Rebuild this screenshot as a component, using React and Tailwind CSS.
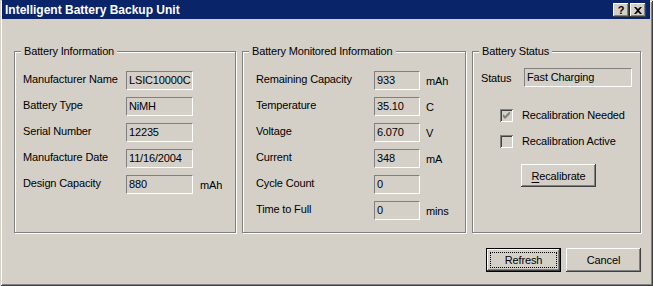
const RAISED =
  "shadow-[inset_-1px_-1px_#404040,inset_1px_1px_#ffffff,inset_-2px_-2px_#808080,inset_2px_2px_#d4d0c8]";

const INFO = [
  { label: "Manufacturer Name", value: "LSIC10000C" },
  { label: "Battery Type", value: "NiMH" },
  { label: "Serial Number", value: "12235" },
  { label: "Manufacture Date", value: "11/16/2004" },
  { label: "Design Capacity", value: "880", unit: "mAh" },
];

const MONITORED = [
  { label: "Remaining Capacity", value: "933", unit: "mAh" },
  { label: "Temperature", value: "35.10", unit: "C" },
  { label: "Voltage", value: "6.070", unit: "V" },
  { label: "Current", value: "348", unit: "mA" },
  { label: "Cycle Count", value: "0" },
  { label: "Time to Full", value: "0", unit: "mins" },
];

function GroupBox({ title, className, children }) {
  return (
    <div
      className={`relative h-[182px] border border-[#808080] shadow-[inset_1px_1px_#ffffff,1px_1px_#ffffff] ${className}`}
    >
      {/* legend sits over the etched line */}
      <span className="absolute -top-[8px] left-[6px] px-[3px] bg-[#d4d0c8] leading-[14px]">
        {title}
      </span>
      {children}
    </div>
  );
}

function Field({ value, className }) {
  return (
    <div
      className={`h-[19px] pl-[2px] pt-[1px] leading-[14px] whitespace-nowrap border border-t-[#808080] border-l-[#808080] border-b-white border-r-white bg-[#d4d0c8] ${className}`}
    >
      {value}
    </div>
  );
}

function Row({ item, labelW, fieldW, unitGap }) {
  return (
    <div className="flex h-[19px] items-start">
      <span className={`${labelW} pt-[1px] leading-[14px] whitespace-nowrap`}>{item.label}</span>
      <Field value={item.value} className={fieldW} />
      {item.unit && (
        <span className={`${unitGap} mt-[3px] leading-[14px]`}>{item.unit}</span>
      )}
    </div>
  );
}

function CheckBox({ checked, label }) {
  return (
    <div className="flex items-center">
      <div className="w-[13px] h-[13px] bg-[#d4d0c8] shadow-[inset_1px_1px_#808080,inset_-1px_-1px_#ffffff,inset_2px_2px_#404040,inset_-2px_-2px_#d4d0c8] flex items-center justify-center">
        {checked && (
          <svg width="7" height="7" viewBox="0 0 7 7" className="block">
            <path d="M0 2v3l2 2 5-5V-1L2 4z" fill="#808080" />
          </svg>
        )}
      </div>
      <span className="ml-[9px] leading-[14px]">{label}</span>
    </div>
  );
}

export default function App() {
  return (
    <div className="w-[653px] h-[286px] bg-[#d4d0c8] flex flex-col text-[11px] tracking-[-0.15px] text-black font-['Liberation_Sans',Arial,sans-serif] shadow-[inset_1px_1px_#d4d0c8,inset_-1px_-1px_#404040,inset_2px_2px_#ffffff,inset_-2px_-2px_#808080]">
      {/* Title bar */}
      <div className="ml-[2px] mr-[3px] h-[19px] bg-[#0a246a] flex items-center pl-[3px] pr-[4px]">
        <span className="text-white font-bold text-[12px] tracking-normal leading-[14px]">
          Intelligent Battery Backup Unit
        </span>
        <div className="ml-auto flex gap-[1px] mt-[1px]">
          <div className={`w-[16px] h-[14px] bg-[#d4d0c8] ${RAISED} flex items-center justify-center font-bold text-[11px] leading-[11px]`}>
            ?
          </div>
          <div className={`w-[16px] h-[14px] bg-[#d4d0c8] ${RAISED} flex items-center justify-center`}>
            <svg width="8" height="7" viewBox="0 0 8 7" className="block">
              <path d="M0 0h2l2 2 2-2h2L5 3.5 8 7H6L4 5 2 7H0l3-3.5z" fill="#000" />
            </svg>
          </div>
        </div>
      </div>

      {/* Group boxes */}
      <div className="flex gap-[6px] ml-[14px] mt-[32px]">
        <GroupBox title="Battery Information" className="w-[222px]">
          <div className="flex flex-col gap-[7px] pl-[8px] pt-[19px]">
            {INFO.map((it) => (
              <Row key={it.label} item={it} labelW="w-[103px]" fieldW="w-[67px]" unitGap="ml-[7px]" />
            ))}
          </div>
        </GroupBox>

        <GroupBox title="Battery Monitored Information" className="w-[224px]">
          <div className="flex flex-col gap-[7px] pl-[13px] pt-[19px]">
            {MONITORED.map((it) => (
              <Row key={it.label} item={it} labelW="w-[118px]" fieldW="w-[46px]" unitGap="ml-[6px]" />
            ))}
          </div>
        </GroupBox>

        <GroupBox title="Battery Status" className="w-[169px]">
          <div className="flex flex-col pl-[8px] pt-[16px]">
            <div className="flex items-center">
              <span className="w-[43px] leading-[14px]">Status</span>
              <Field value="Fast Charging" className="w-[108px]" />
            </div>
            <div className="flex flex-col gap-[12px] ml-[19px] mt-[21px]">
              <CheckBox checked label="Recalibration Needed" />
              <CheckBox label="Recalibration Active" />
            </div>
            <button
              className={`ml-[40px] mt-[16px] w-[75px] h-[23px] bg-[#d4d0c8] ${RAISED} leading-[14px]`}
            >
              <span className="underline underline-offset-2">R</span>ecalibrate
            </button>
          </div>
        </GroupBox>
      </div>

      {/* Dialog buttons */}
      <div className="flex justify-end gap-[5px] mr-[12px] mt-[15px]">
        <button className="w-[75px] h-[24px] border border-black bg-[#d4d0c8] p-0">
          <div className={`w-full h-full ${RAISED} p-[3px]`}>
            <div className="w-full h-full border border-dotted border-black flex items-center justify-center leading-[14px]">
              Refresh
            </div>
          </div>
        </button>
        <button className={`w-[75px] h-[24px] bg-[#d4d0c8] ${RAISED} leading-[14px]`}>
          Cancel
        </button>
      </div>
    </div>
  );
}
